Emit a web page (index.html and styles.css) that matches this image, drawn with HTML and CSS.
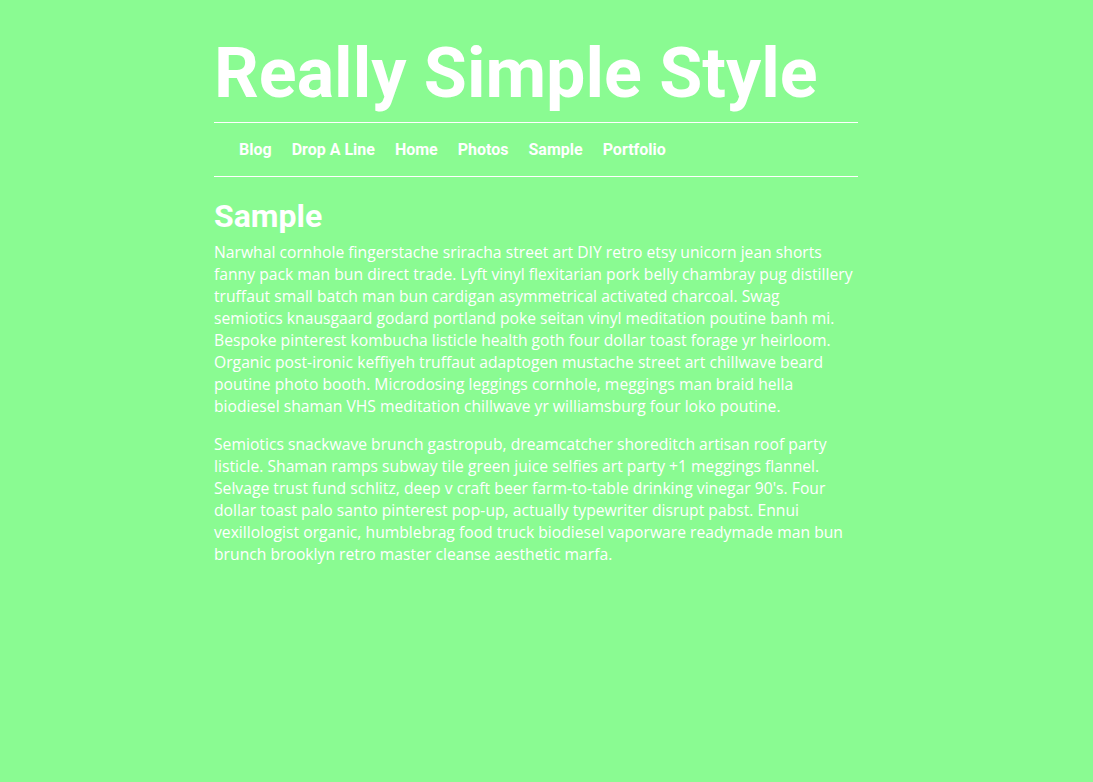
FILE: index.html
```html
<!DOCTYPE html>
<html lang="en">
<head>
<meta charset="utf-8">
<title>Really Simple Style</title>
<link rel="stylesheet" href="styles.css">
</head>
<body>
<div class="page">
  <header class="site-header">
    <h1 class="site-title">Really Simple Style</h1>
  </header>
  <nav class="site-nav">
    <ul class="nav-list">
      <li><a href="#">Blog</a></li>
      <li><a href="#">Drop A Line</a></li>
      <li><a href="#">Home</a></li>
      <li><a href="#">Photos</a></li>
      <li><a href="#">Sample</a></li>
      <li><a href="#">Portfolio</a></li>
    </ul>
  </nav>
  <main class="content">
    <h2 class="page-title">Sample</h2>
    <p>Narwhal cornhole fingerstache sriracha street art DIY retro etsy unicorn jean shorts fanny pack man bun direct trade. Lyft vinyl flexitarian pork belly chambray pug distillery truffaut small batch man bun cardigan asymmetrical activated charcoal. Swag semiotics&nbsp;knausgaard godard portland poke seitan vinyl meditation poutine banh mi. Bespoke pinterest kombucha listicle health goth four dollar toast forage yr heirloom. Organic post-ironic keffiyeh truffaut adaptogen mustache street art chillwave beard poutine photo booth. Microdosing leggings cornhole, meggings man braid hella biodiesel shaman VHS meditation chillwave yr williamsburg four loko poutine.</p>
    <p>Semiotics snackwave brunch gastropub, dreamcatcher shoreditch artisan roof party listicle. Shaman ramps subway tile green juice selfies art party +1 meggings flannel. Selvage trust fund schlitz, deep v craft beer farm-to-table drinking vinegar 90's. Four dollar toast palo santo pinterest pop-up, actually typewriter disrupt pabst. Ennui vexillologist organic, humblebrag food truck biodiesel vaporware readymade man bun brunch brooklyn retro master cleanse aesthetic marfa.</p>
  </main>
</div>
</body>
</html>
```

FILE: styles.css
```css
html, body {
  margin: 0;
  padding: 0;
  background: #8afb92;
  color: #ffffff;
}

body {
  font-family: "Open Sans", "Liberation Sans", sans-serif;
}

.page {
  width: 644px;
  margin: 0 0 0 214px;
}

.site-header {
  border-bottom: 1px solid #ffffff;
  padding-bottom: 7px;
}

.site-title {
  margin: 0;
  padding-top: 31px;
  font-family: Roboto, "Liberation Sans", sans-serif;
  font-weight: 700;
  font-size: 70px;
  line-height: 84px;
}

.site-nav {
  border-bottom: 1px solid #ffffff;
}

.nav-list {
  list-style: none;
  margin: 0;
  padding: 17px 0 16px 25px;
  display: flex;
  gap: 20px;
  font-family: Roboto, "Liberation Sans", sans-serif;
  font-weight: 700;
  font-size: 16px;
  line-height: 20px;
}

.nav-list a {
  color: #ffffff;
  text-decoration: none;
}

.content {
  padding-top: 20px;
}

.page-title {
  margin: 0 0 6px;
  font-family: Roboto, "Liberation Sans", sans-serif;
  font-weight: 700;
  font-size: 32px;
  line-height: 38px;
}

.content p {
  margin: 0 0 16px;
  font-size: 15.7px;
  line-height: 22px;
}
```
